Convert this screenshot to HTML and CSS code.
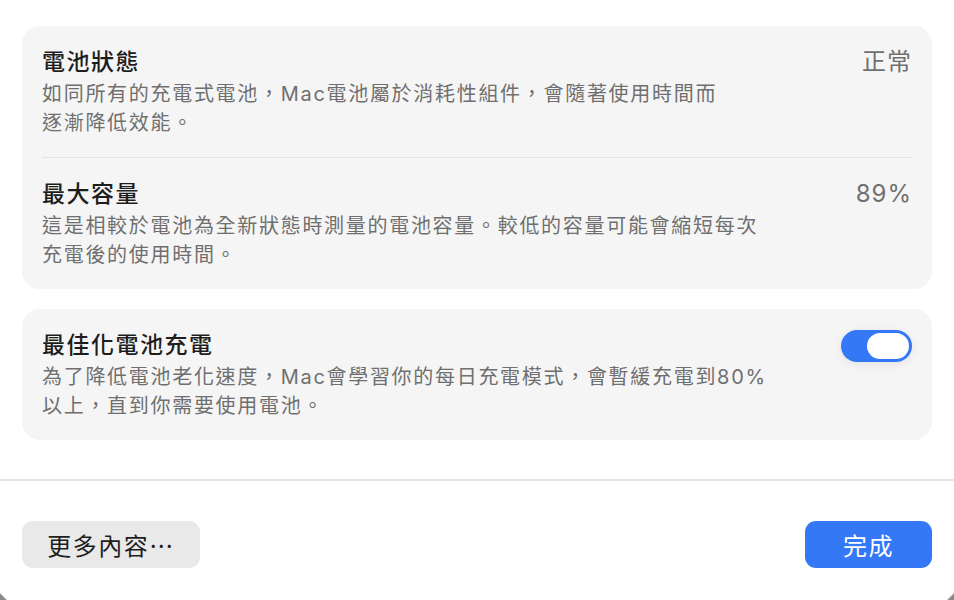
FILE: index.html
```html
<!DOCTYPE html>
<html lang="zh-Hant">
<head>
<meta charset="utf-8">
<title>電池健康度</title>
<link rel="stylesheet" href="styles.css">
</head>
<body>
<div class="window">
  <div class="content">
    <section class="card">
      <div class="row">
        <div class="text">
          <div class="title">電池狀態</div>
          <div class="desc">如同所有的充電式電池，Mac電池屬於消耗性組件，會隨著使用時間而<br>逐漸降低效能。</div>
        </div>
        <div class="value">正常</div>
      </div>
      <div class="sep"></div>
      <div class="row">
        <div class="text">
          <div class="title">最大容量</div>
          <div class="desc">這是相較於電池為全新狀態時測量的電池容量。較低的容量可能會縮短每次<br>充電後的使用時間。</div>
        </div>
        <div class="value">89%</div>
      </div>
    </section>
    <section class="card">
      <div class="row">
        <div class="text">
          <div class="title">最佳化電池充電</div>
          <div class="desc">為了降低電池老化速度，Mac會學習你的每日充電模式，會暫緩充電到80%<br>以上，直到你需要使用電池。</div>
        </div>
        <div class="toggle"><div class="knob"></div></div>
      </div>
    </section>
  </div>
  <div class="footer">
    <button class="btn btn-plain">更多內容⋯</button>
    <button class="btn btn-primary">完成</button>
  </div>
  <div class="corner corner-left"></div>
  <div class="corner corner-right"></div>
</div>
</body>
</html>
```
FILE: styles.css
```css
* { box-sizing: border-box; }
html, body {
  margin: 0;
  padding: 0;
  background: #ffffff;
}
body {
  font-family: Inter, "Noto Sans CJK TC", sans-serif;
  color: #1f1f1f;
  width: 954px;
  height: 600px;
  overflow: hidden;
}
.window {
  position: relative;
  width: 954px;
  height: 600px;
  display: flex;
  flex-direction: column;
}
.content {
  padding: 26px 22px 0 22px;
  display: flex;
  flex-direction: column;
  gap: 20px;
  height: 479px;
}
.card {
  background: #f5f5f5;
  border-radius: 18px;
  padding: 0 20px;
}
.row {
  display: flex;
  justify-content: space-between;
  align-items: flex-start;
  padding: 20px 0 19px 0;
}
.sep {
  height: 1px;
  background: #e3e3e3;
}
.title {
  font-size: 23px;
  font-weight: 500;
  letter-spacing: 1.5px;
  line-height: 32px;
  color: #1d1d1d;
}
.desc {
  font-size: 20px;
  letter-spacing: 1.7px;
  line-height: 29px;
  color: #6f6f6f;
  margin-top: 2px;
}
.value {
  font-size: 24px;
  letter-spacing: 1px;
  line-height: 32px;
  color: #707070;
}
.toggle {
  width: 71px;
  height: 32px;
  margin-top: 1px;
  border-radius: 16px;
  background: #3478f6;
  box-shadow: 0 2px 10px rgba(0,0,0,0.08);
  display: flex;
  justify-content: flex-end;
  align-items: center;
  padding-right: 3px;
}
.knob {
  width: 42px;
  height: 26px;
  border-radius: 13px;
  background: #ffffff;
}
.footer {
  border-top: 2px solid #e4e4e4;
  flex: 1;
  display: flex;
  justify-content: space-between;
  align-items: flex-start;
  padding: 40px 22px 0 22px;
}
.btn {
  height: 47px;
  border: none;
  border-radius: 11px;
  font-family: Inter, "Noto Sans CJK TC", sans-serif;
  font-size: 24px;
  letter-spacing: 1.5px;
  padding: 0;
}
.btn-plain {
  width: 178px;
  background: #e9e9e9;
  color: #1e1e1e;
}
.btn-primary {
  width: 127px;
  background: #3478f6;
  color: #ffffff;
}
.corner {
  position: absolute;
  bottom: 0;
  width: 8px;
  height: 8px;
}
.corner-left {
  left: 0;
  background: linear-gradient(45deg, #8a8a8a 0%, #8a8a8a 35%, transparent 50%);
}
.corner-right {
  right: 0;
  background: linear-gradient(-45deg, #8a8a8a 0%, #8a8a8a 35%, transparent 50%);
}
```
